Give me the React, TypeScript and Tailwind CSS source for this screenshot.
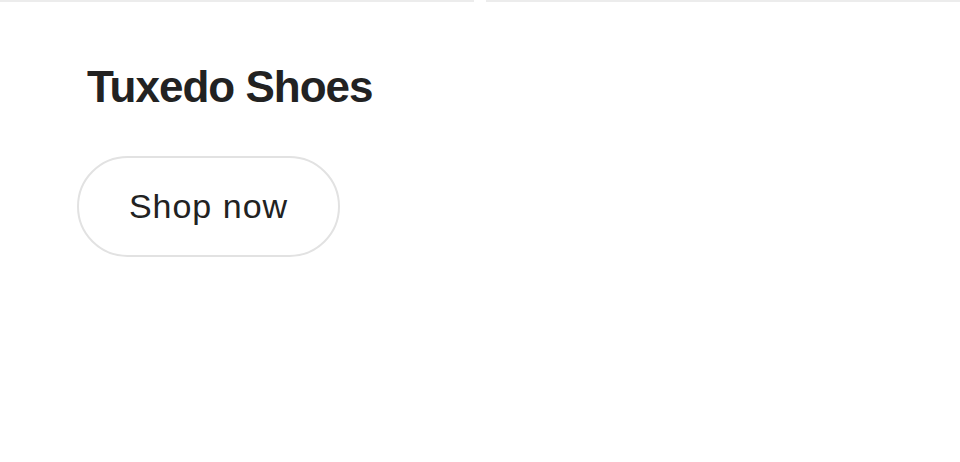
import React from 'react';

const App = () => {
  return (
    <div className="w-[960px] h-[462px] bg-white overflow-hidden" style={{ fontFamily: '"Liberation Sans", Arial, sans-serif' }}>
      {/* top dividers */}
      <div className="flex gap-3">
        <div className="flex-1 h-[2px] bg-[#ececec]" />
        <div className="flex-1 h-[2px] bg-[#ececec]" />
      </div>

      <div className="px-[77px] pt-[60px]">
        <h2 className="pl-[10px] text-[44px] leading-[50px] font-bold tracking-[-1px] text-[#222222]">
          Tuxedo Shoes
        </h2>
        <button className="mt-[44px] w-[263px] h-[101px] rounded-full border-2 border-[#e2e2e2] bg-white flex items-center justify-center text-[34px] tracking-[1px] text-[#222222]">
          Shop now
        </button>
      </div>
    </div>
  );
};

export default App;
